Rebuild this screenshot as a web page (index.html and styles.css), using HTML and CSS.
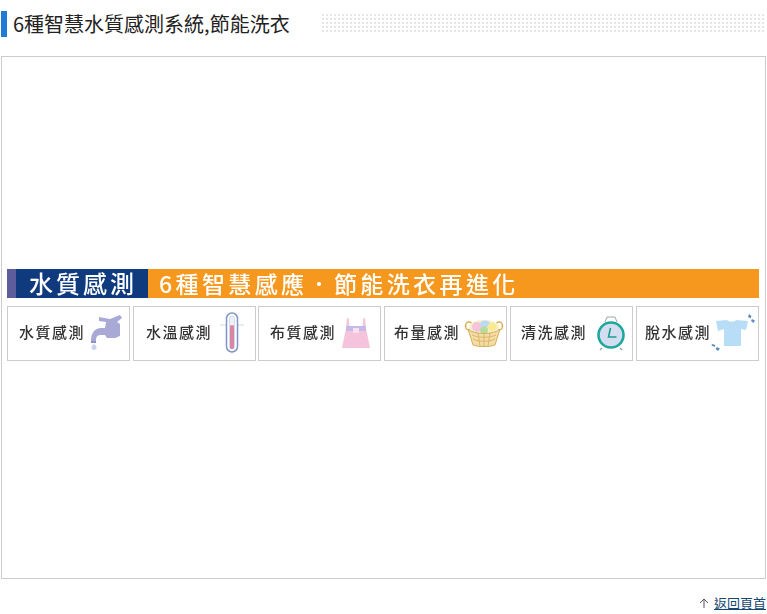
FILE: index.html
```html
<!DOCTYPE html>
<html lang="zh-Hant">
<head>
<meta charset="utf-8">
<title>6種智慧水質感測系統,節能洗衣</title>
<link rel="stylesheet" href="styles.css">
</head>
<body>
<header class="head">
  <h2 class="title">6種智慧水質感測系統,節能洗衣</h2>
  <div class="dots"></div>
</header>
<main class="frame">
  <div class="banner">
    <div class="band">
      <span class="strip"></span>
      <span class="band-main">水質感測</span>
      <span class="band-sub">6種智慧感應．節能洗衣再進化</span>
    </div>
    <ul class="cards">
      <li class="card card-a"><span class="label">水質感測</span>
        <svg class="ico" viewBox="0 0 36 38" width="36" height="38"><path d="M12 3l11 2 10-4 2 3-5 4 3 2v12l-5 2h-8l-2-3h-4c-4 0-5 2-5 6H4c0-8 4-13 10-13h4l1-6-7-1z" fill="#a9a9d6"/><path d="M4 27h5v2H4z" fill="#8f8fc8"/><path d="M7 30c1.500 1 2.500 2 2.500 3.500S8.500 36 7 36s-2.500-1-2.500-2.500S5.500 31 7 30z" fill="#c5d3ec"/></svg>
      </li>
      <li class="card card-b"><span class="label">水溫感測</span>
        <svg class="ico ico-temp" viewBox="0 0 36 42" width="36" height="42"><path d="M6 13h24" stroke="#c8dcec" stroke-width="1"/><rect x="12.500" y="1" width="11" height="39" rx="5.500" fill="#fff" stroke="#7d94c4" stroke-width="1.500"/><rect x="15.500" y="4" width="5" height="33" rx="2.500" fill="#eef2f8" stroke="#b5c5de" stroke-width=".6"/><rect x="16" y="13" width="4" height="24" rx="1.500" fill="#dc86a6"/></svg>
      </li>
      <li class="card card-c"><span class="label">布質感測</span>
        <svg class="ico ico-dress" viewBox="0 0 30 32" width="30" height="32"><path d="M6 1h1.500l1 8h13l1-8H24l1 10 4 20H1l4-20z" fill="#f6c3dc"/><path d="M5 9h20v5H5z" fill="#c4bce6"/><path d="M12 11h6v5h-6z" fill="#f9e0ee"/></svg>
      </li>
      <li class="card card-d"><span class="label">布量感測</span>
        <svg class="ico" viewBox="0 0 40 28" width="40" height="28"><ellipse cx="5" cy="7" rx="3.500" ry="4" fill="none" stroke="#d9ad55" stroke-width="1.500"/><ellipse cx="35" cy="7" rx="3.500" ry="4" fill="none" stroke="#d9ad55" stroke-width="1.500"/><ellipse cx="20" cy="8" rx="15" ry="7" fill="#f5efc8"/><ellipse cx="13" cy="8" rx="5" ry="5" fill="#f4c4dc"/><ellipse cx="21" cy="5" rx="5" ry="3.500" fill="#bcd8f2"/><ellipse cx="20" cy="11" rx="4" ry="3.500" fill="#b5dc9c"/><ellipse cx="28" cy="8" rx="4.500" ry="4" fill="#f7ea90"/><path d="M4 10c5 6 27 6 32 0l-5 16c-5 2-17 2-22 0z" fill="#f2dca8" stroke="#d9ad55"/><path d="M8 16c6 3 18 3 24 0M9 20c6 3 16 3 22 0M14 14l2 13M20 15v12M26 14l-2 13" stroke="#d9ad55" fill="none" stroke-width=".8"/></svg>
      </li>
      <li class="card card-e"><span class="label">清洗感測</span>
        <svg class="ico" viewBox="0 0 30 36" width="30" height="36"><path d="M9 7l2-5h8l2 5" fill="none" stroke="#9aa4ae" stroke-width="1"/><path d="M6 33l-2 2M24 33l2 2" stroke="#9aa4ae" stroke-width="1.500"/><circle cx="15" cy="20" r="12.500" fill="#d3dff0" stroke="#1fa79c" stroke-width="2.600"/><path d="M14.500 13l-2 9h8" fill="none" stroke="#1f9c92" stroke-width="1.600"/></svg>
      </li>
      <li class="card card-f"><span class="label">脫水感測</span>
        <svg class="ico ico-shirt" viewBox="0 0 46 40" width="46" height="40"><path d="M5 8l11-1c2 2 7 2 9 0l12 1-2 9-5-1v17H13V16l-6 2z" fill="#b8ddf6"/><path d="M38 1l2.500 2-1 2.500-2.500-1.500zM41 6l3 1.500-1.500 2.500-2.500-2zM1 31l3.500 1-1 2-3-1.500zM6 34l3 1.500-2 2.500-2.500-2z" fill="#5f8fc0"/></svg>
      </li>
    </ul>
  </div>
</main>
<footer class="foot">
  <svg class="up" viewBox="0 0 10 10" width="10" height="10"><path d="M1 5l4-4 4 4M5 1v9" fill="none" stroke="#555" stroke-width="1"/></svg>
  <a class="top" href="#">返回頁首</a>
</footer>
</body>
</html>
```
FILE: styles.css
```css
html, body {
  margin: 0;
  padding: 0;
  background: #fff;
  font-family: "Noto Sans CJK TC", "Noto Sans", sans-serif;
}
body {
  width: 767px;
  height: 614px;
  overflow: hidden;
  display: flex;
  flex-direction: column;
}
.head {
  display: flex;
  align-items: center;
  height: 26px;
  margin: 11px 1px 19px 1px;
  border-left: 6px solid #1e7ad6;
}
.title {
  margin: 0 0 0 6px;
  width: 307px;
  flex: none;
  font-size: 20px;
  font-weight: 400;
  line-height: 26px;
  color: #222;
  white-space: nowrap;
}
.dots {
  flex: 1;
  height: 20px;
  background-image: conic-gradient(#e6e6e6 25%, transparent 0);
  background-size: 4px 4px;
}
.frame {
  box-sizing: border-box;
  width: 765px;
  height: 523px;
  margin-left: 1px;
  border: 1px solid #ccc;
  display: flex;
  flex-direction: column;
  justify-content: center;
  padding: 0 6px 0 5px;
}
.banner {
  margin-top: -6px;
  filter: blur(.3px);
}
.band {
  display: flex;
  align-items: center;
  height: 29px;
  background: #f5981d;
}
.strip {
  width: 9px;
  height: 100%;
  background: #5d5d9b;
}
.band-main {
  box-sizing: border-box;
  width: 132px;
  height: 100%;
  padding-left: 13px;
  background: #0f3a7d;
  color: #fff;
  font-size: 24px;
  font-weight: 500;
  line-height: 28px;
  letter-spacing: 3px;
  white-space: nowrap;
}
.band-sub {
  padding-left: 11px;
  color: #fff;
  font-size: 23px;
  font-weight: 500;
  line-height: 28px;
  letter-spacing: 3.400px;
  white-space: nowrap;
}
.cards {
  display: flex;
  gap: 3px;
  margin: 8px 0 0;
  padding: 0;
  list-style: none;
}
.card {
  box-sizing: border-box;
  display: flex;
  align-items: center;
  justify-content: space-between;
  width: 123px;
  height: 55px;
  padding: 0 6px 0 11px;
  border: 1px solid #ccc;
}
.card-a .ico { margin-right: 0; }
.card-b { padding-left: 12px; }
.card-c { margin-left: -1px; }
.card-d { padding-left: 9px; padding-right: 2px; }
.card-e { padding-left: 10px; }
.card-f { padding-left: 8px; }
.label {
  font-size: 15px;
  font-weight: 500;
  line-height: 20px;
  margin-top: -2px;
  letter-spacing: 1.500px;
  color: #333;
  white-space: nowrap;
}
.ico {
  flex: none;
}
.ico-temp {
  margin-right: -1px;
}
.ico-dress {
  margin-right: 3px;
}
.ico-shirt {
  margin-right: -5px;
}
.foot {
  display: flex;
  align-items: center;
  justify-content: flex-end;
  gap: 5px;
  height: 35px;
  padding: 13px 1px 0 0;
  box-sizing: border-box;
}
.up {
  flex: none;
}
.top {
  font-size: 13px;
  line-height: 18px;
  color: #14486e;
  text-decoration: underline;
}
```
